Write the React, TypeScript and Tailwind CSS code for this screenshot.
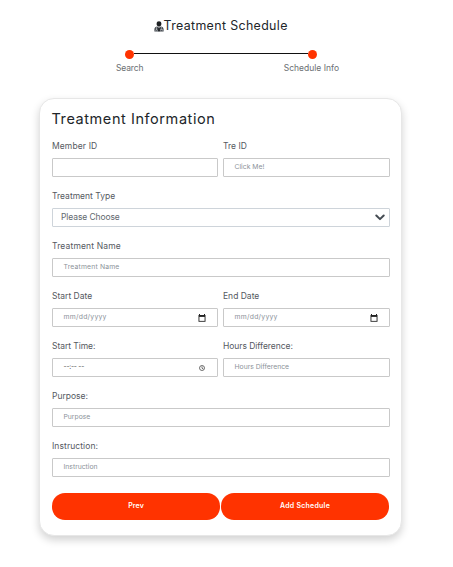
import React from "react";

type FieldProps = {
  label: string;
  labelClass?: string;
  text?: string;
  textClass?: string;
  icon?: React.ReactNode;
  select?: boolean;
};

function Field({ label, labelClass = "", text, textClass = "text-[#8b9299]", icon, select }: FieldProps) {
  return (
    <div className="h-[50px] min-w-0">
      <div className={`mb-[3px] h-[18px] whitespace-nowrap text-[8.5px] leading-[18px] text-[#55595f] ${labelClass}`}>{label}</div>
      <div
        className={`flex h-[19px] items-center justify-between rounded-[1px] border bg-white ${
          select ? "border-[#ced4da] pl-[8px] pr-[4px]" : "border-[#c9c9c9] pl-[10.5px] pr-[11px]"
        }`}
      >
        <span className={`whitespace-nowrap ${select ? "text-[8.5px] leading-[17px]" : "pb-px text-[6.8px] leading-[16px]"} ${textClass}`}>
          {text}
        </span>
        {icon}
      </div>
    </div>
  );
}

function DoctorIcon() {
  return (
    <svg className="h-[11px] w-[10px]" viewBox="0 0 10 11">
      <path d="M2.6 2.7C2.6 1 3.6.2 5 .2s2.4.8 2.4 2.5S6.4 5.6 5 5.6 2.6 4.4 2.6 2.7z" fill="#1c1f22" />
      <path d="M.4 10.6V8.2C.4 6.6 1.6 5.7 3.2 5.5L5 6.8l1.8-1.3c1.6.2 2.8 1.1 2.8 2.7v2.4z" fill="#454a50" />
      <path d="M2.4 6.2v2.3M7.5 6.2v1.5M1.7 9.7c0-1.6 1.7-1.6 1.7 0M6.6 9.6V8.5h1.8v1.1" fill="none" stroke="#dfe2e6" strokeWidth=".6" />
      <path d="M4.5 6.7h1l.3 3.5H4.2z" fill="#181a1d" />
    </svg>
  );
}

function CalendarIcon() {
  return (
    <svg className="h-[8px] w-[8px]" viewBox="0 0 8 8">
      <path d="M1 0h1v1h4V0h1v1h.5v6.7H.5V1H1z" fill="#222" />
      <path d="M1.4 2.9h5.2v4H1.4z" fill="#fff" />
    </svg>
  );
}

function ClockIcon() {
  return (
    <svg className="mr-[1px] h-[6px] w-[6px]" viewBox="0 0 6 6" fill="none" stroke="#444" strokeWidth=".75">
      <circle cx="3" cy="3" r="2.5" />
      <path d="M3 1.4v1.8l1.3.8" />
    </svg>
  );
}

function Chevron() {
  return (
    <svg className="h-[7px] w-[10px]" viewBox="0 0 10 7" fill="none" stroke="#444b52" strokeWidth="2" strokeLinecap="round" strokeLinejoin="round">
      <path d="M1.3 1.5 5 5.1l3.7-3.6" />
    </svg>
  );
}

export default function App() {
  return (
    <main className="h-[567px] w-[453px] overflow-hidden bg-white pt-[16px] font-['Inter','Open_Sans',sans-serif]">
      <h1 className="ml-[153.5px] flex h-[20px] items-center whitespace-nowrap text-[12.4px] leading-[20px] text-[#212529]">
        <DoctorIcon />
        <span className="tracking-[0.36px]">Treatment Schedule</span>
      </h1>
      <div className="ml-[125px] mt-[14px] flex h-[9px] w-[192px] items-center">
        <span className="h-[9px] w-[9px] rounded-full bg-[#ff3300]" />
        <span className="mb-[2px] h-px flex-1 bg-[#111]" />
        <span className="h-[9px] w-[9px] rounded-full bg-[#ff3300]" />
      </div>
      <div className="ml-[116px] mt-[3px] flex h-[12px] w-[223px] justify-between whitespace-nowrap text-[8.5px] leading-[12px] text-[#6b6f73]">
        <span className="tracking-[-0.15px]">Search</span>
        <span>Schedule Info</span>
      </div>

      <section className="ml-[39px] mt-[24px] h-[438px] w-[363px] rounded-[15px] border border-[#e7e7e7] bg-white pl-[12px] pr-[11px] shadow-[0_4px_9px_rgba(0,0,0,0.18)]">
        <h2 className="-ml-[0.5px] h-[38px] whitespace-nowrap pt-[8px] text-[14.5px] leading-[24px] tracking-[0.57px] text-[#212529]">Treatment Information</h2>
        <div className="grid grid-cols-[166px_167px] gap-x-[5px]">
          <Field label="Member ID" labelClass="tracking-[0.12px]" />
          <Field label="Tre ID" text="Click Me!" />
        </div>
        <Field label="Treatment Type" text="Please Choose" textClass="text-[#62686e] tracking-[-0.1px]" select icon={<Chevron />} />
        <Field label="Treatment Name" labelClass="tracking-[0.15px]" text="Treatment Name" textClass="text-[#8b9299] tracking-[0.18px]" />
        <div className="grid grid-cols-[166px_167px] gap-x-[5px]">
          <Field label="Start Date" text="mm/dd/yyyy" textClass="text-[#8b9299] tracking-[0.28px]" icon={<CalendarIcon />} />
          <Field label="End Date" text="mm/dd/yyyy" textClass="text-[#8b9299] tracking-[0.28px]" icon={<CalendarIcon />} />
          <Field label="Start Time:" labelClass="tracking-[-0.05px]" text="--:-- --" textClass="text-[#555] tracking-[-0.25px]" icon={<ClockIcon />} />
          <Field label="Hours Difference:" labelClass="tracking-[-0.05px]" text="Hours Difference" />
        </div>
        <Field label="Purpose:" text="Purpose" />
        <Field label="Instruction:" labelClass="tracking-[0.08px]" text="Instruction" />
        <div className="mt-[6px] flex gap-px text-[7px] font-semibold text-white">
          <button className="h-[27px] w-[168px] rounded-[13px] bg-[#ff3300] tracking-[0.12px]">Prev</button>
          <button className="h-[27px] w-[168px] rounded-[13px] bg-[#ff3300] tracking-[0.25px]">Add Schedule</button>
        </div>
      </section>
    </main>
  );
}
